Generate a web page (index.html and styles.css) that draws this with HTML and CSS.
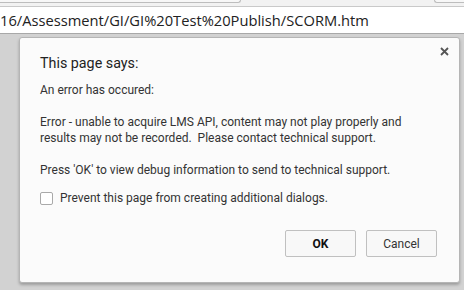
FILE: index.html
```html
<!DOCTYPE html>
<html lang="en">
<head>
  <meta charset="UTF-8" />
  <title>This page says</title>
  <link rel="stylesheet" href="styles.css">
</head>
<body>
  <!-- Browser chrome -->
  <div class="tabs">
    <div class="tab-left"></div>
    <div class="tab-right"></div>
  </div>
  <div class="address-bar">16/Assessment/GI/GI%20Test%20Publish/SCORM.htm</div>

  <!-- Page area behind the dialog -->
  <div class="page">
    <div class="dialog">
      <button class="close-btn" aria-label="Close">
        <svg width="9" height="9" viewBox="0 0 9 9">
          <path d="M1 1 L8 8 M8 1 L1 8" stroke="#555" stroke-width="1.8" />
        </svg>
      </button>
      <h2 class="dialog-title">This page says:</h2>
      <div class="dialog-body">
        <p>An error has occured:</p>
        <p>Error - unable to acquire LMS API, content may not play properly and results may not be recorded.&nbsp; Please contact technical support.</p>
        <p>Press 'OK' to view debug information to send to technical support.</p>
      </div>
      <label class="prevent">
        <span class="check-box"></span>
        Prevent this page from creating additional dialogs.
      </label>
      <div class="dialog-buttons">
        <button class="btn btn-ok">OK</button>
        <button class="btn">Cancel</button>
      </div>
    </div>
  </div>
</body>
</html>
```

FILE: styles.css
```css
/* Reset & Base */
* {
  margin: 0;
  padding: 0;
  box-sizing: border-box;
}

body {
  width: 464px;
  height: 290px;
  overflow: hidden;
  font-family: Roboto, 'Open Sans', sans-serif;
  color: #333;
  background-color: #d2d2d2;
}

/* Browser chrome */
.tabs {
  display: flex;
  height: 6px;
  background-color: #f2f2f2;
}

.tab-left {
  width: 241px;
  height: 3px;
  border: 1px solid #bdbdbd;
  border-top: none;
  border-left: none;
  border-radius: 0 0 3px 0;
  background-color: #f7f7f7;
}

.tab-right {
  width: 30px;
  height: 3px;
  margin-left: auto;
  border: 1px solid #bdbdbd;
  border-top: none;
  border-right: none;
  border-radius: 0 0 0 3px;
  background-color: #f7f7f7;
}

.address-bar {
  height: 28px;
  background-color: #fff;
  border-top: 1px solid #c9c9c9;
  border-bottom: 1px solid #a8a8a8;
  font-family: 'Open Sans', sans-serif;
  font-size: 14.7px;
  line-height: 26px;
  color: #222;
  white-space: nowrap;
}

/* Page area */
.page {
  height: 256px;
  padding: 3px 5px 0 19px;
  background-color: #d2d2d2;
}

/* Dialog */
.dialog {
  position: relative;
  width: 441px;
  height: 246px;
  padding: 15px 22px 0 20px;
  background-color: #fbfbfb;
  border: 1px solid #b5b5b5;
  border-radius: 3px;
  box-shadow: 0 2px 3px rgba(0, 0, 0, 0.25);
}

.close-btn {
  position: absolute;
  top: 9px;
  right: 10px;
  width: 9px;
  height: 9px;
  border: none;
  background: none;
  display: flex;
}

.dialog-title {
  font-size: 14.3px;
  font-weight: normal;
  line-height: 20px;
  color: #222;
  margin-bottom: 9px;
}

.dialog-body {
  font-size: 12px;
  line-height: 16px;
}

.dialog-body p {
  margin-bottom: 16px;
}

.dialog-body p:last-child {
  margin-bottom: 12px;
}

/* Checkbox row */
.prevent {
  display: flex;
  align-items: center;
  gap: 7px;
  font-size: 12px;
  line-height: 16px;
}

.check-box {
  width: 13px;
  height: 13px;
  border: 1px solid #a9a9a9;
  border-radius: 2px;
  background-color: #fff;
}

/* Buttons */
.dialog-buttons {
  display: flex;
  justify-content: flex-end;
  gap: 10px;
  margin-top: 24px;
}

.btn {
  width: 71px;
  height: 27px;
  font-family: inherit;
  font-size: 12px;
  color: #333;
  background-color: #f8f8f8;
  border: 1px solid #c0c0c0;
  border-radius: 2px;
}

.btn-ok {
  font-weight: bold;
  color: #111;
}
```
